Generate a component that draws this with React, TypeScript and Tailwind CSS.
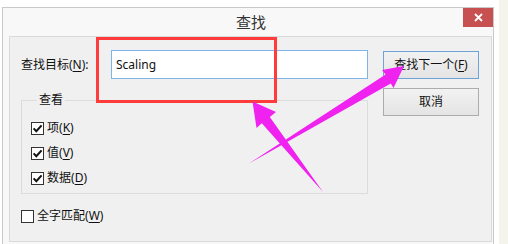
import React from 'react';

const Box: React.FC<{ checked?: boolean }> = ({ checked }) => (
  <span className="flex h-[13px] w-[13px] shrink-0 items-center justify-center border border-[#333333] bg-white">
    {checked && (
      <svg width="11" height="11" viewBox="0 0 11 11">
        <path d="M1.6 5.4 L4.3 8.2 L9.6 2.3" fill="none" stroke="#111111" strokeWidth="2" />
      </svg>
    )}
  </span>
);

const Check: React.FC<{ label: string; keyChar: string; checked?: boolean }> = ({ label, keyChar, checked }) => (
  <div className="flex h-[16px] items-center gap-[3px] text-[12px] leading-[16px] text-[#111]">
    <Box checked={checked} />
    <span>
      {label}(<span className="underline underline-offset-2">{keyChar}</span>)
    </span>
  </div>
);

const App: React.FC = () => {
  return (
    <div className="relative flex h-[244px] w-[508px] overflow-hidden bg-white font-['Noto_Sans','Noto_Sans_CJK_SC',sans-serif]">
      {/* Dialog window */}
      <div className="ml-[2px] mt-[7px] flex h-[237px] w-[492px] flex-col border border-b-0 border-[#c9c9c9] bg-[#f8f8f8]">
        {/* Title bar */}
        <div className="relative flex h-[28px] shrink-0 items-center justify-center pl-[6px]">
          <span className="text-[15px] leading-[18px] text-[#333]">查找</span>
          <div className="absolute right-0 top-0 flex h-[19px] w-[30px] items-center justify-center bg-[#c75050]">
            <svg width="9" height="9" viewBox="0 0 9 9">
              <path d="M1 1 L8 8 M8 1 L1 8" stroke="#ffffff" strokeWidth="1.8" />
            </svg>
          </div>
        </div>

        {/* Client area */}
        <div className="ml-[6px] mr-[1px] flex h-[206px] border border-[#dadada] bg-[#f0f0f0] pl-[11px] pt-[13px]">
          <div className="flex w-[347px] flex-col">
            <div className="flex h-[29px] items-center">
              <span className="w-[90px] text-[12px] leading-[16px] text-[#111]">
                查找目标(<span className="underline underline-offset-2">N</span>):
              </span>
              <div className="flex h-[29px] w-[257px] items-center border border-[#7eb4ea] bg-white pl-[4px] text-[12px] text-[#111]">
                Scaling
              </div>
            </div>

            <fieldset className="mt-[13px] h-[102px] border border-[#dcdcdc] pl-[9px]">
              <legend className="ml-[6px] px-[2px] text-[12px] leading-[16px] text-[#111]">查看</legend>
              <div className="mt-[12px] flex flex-col gap-[9px]">
                <Check label="项" keyChar="K" checked />
                <Check label="值" keyChar="V" checked />
                <Check label="数据" keyChar="D" checked />
              </div>
            </fieldset>

            <div className="mt-[14px]">
              <Check label="全字匹配" keyChar="W" />
            </div>
          </div>

          <div className="ml-[15px] mt-[1px] flex flex-col gap-[9px]">
            <button className="flex h-[28px] w-[96px] items-center justify-center border border-[#6fa3d8] bg-gradient-to-b from-[#f2f2f2] to-[#e4e4e4] text-[12px] text-[#111]">
              查找下一个(<span className="underline underline-offset-2">F</span>)
            </button>
            <button className="flex h-[28px] w-[96px] items-center justify-center border border-[#acacac] bg-gradient-to-b from-[#f2f2f2] to-[#e4e4e4] text-[12px] text-[#111]">
              取消
            </button>
          </div>
        </div>
      </div>

      <div className="ml-[5px] h-full w-[9px] bg-[#f4f4ed]" />

      {/* Annotations */}
      <div className="pointer-events-none absolute left-[96px] top-[37px] h-[66px] w-[181px] border-[3px] border-[#ff3b3b]" />
      <svg className="pointer-events-none absolute left-0 top-0" width="508" height="244" viewBox="0 0 508 244">
        <polygon
          points="252.5,101.5 276,112 269.8,117 323,192 261.8,123.2 256.5,128"
          fill="#ef22ef"
        />
        <polygon
          points="404,66 382,70 385.6,74.5 249,163.5 390.8,83.4 393.5,88"
          fill="#ef22ef"
        />
      </svg>
    </div>
  );
};

export default App;
